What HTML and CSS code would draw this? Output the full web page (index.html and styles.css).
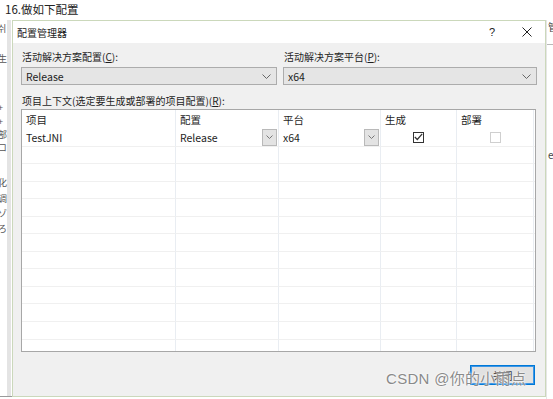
FILE: index.html
```html
<!DOCTYPE html>
<html lang="zh-CN">
<head>
<meta charset="utf-8">
<title>配置管理器</title>
<link rel="stylesheet" href="styles.css">
</head>
<body>
<div class="caption">16.做如下配置</div>
<div class="stage">
  <div class="left-strip">
    <span class="frag f1">쉬</span>
    <span class="frag f2">生</span>
    <span class="frag f3">+</span>
    <span class="frag f4">+</span>
    <span class="frag f5">部</span>
    <span class="frag f6">コ</span>
    <span class="frag f7">化</span>
    <span class="frag f8">调</span>
    <span class="frag f9">ゾ</span>
    <span class="frag f10">ろ</span>
  </div>
  <div class="dialog">
    <div class="titlebar">
      <span class="title">配置管理器</span>
      <span class="help">?</span>
      <svg class="close" width="10" height="10" viewBox="0 0 10 10"><path d="M0.5 0.5 L9.5 9.5 M9.5 0.5 L0.5 9.5" stroke="#222" stroke-width="1" fill="none"/></svg>
    </div>
    <div class="body">
      <div class="top-fields">
        <div class="field">
          <div class="label">活动解决方案配置(<u>C</u>):</div>
          <div class="combo"><span>Release</span><svg class="chev" width="9" height="5" viewBox="0 0 9 5"><path d="M0.5 0.5 L4.5 4.5 L8.5 0.5" stroke="#666" fill="none"/></svg></div>
        </div>
        <div class="field">
          <div class="label">活动解决方案平台(<u>P</u>):</div>
          <div class="combo"><span>x64</span><svg class="chev" width="9" height="5" viewBox="0 0 9 5"><path d="M0.5 0.5 L4.5 4.5 L8.5 0.5" stroke="#666" fill="none"/></svg></div>
        </div>
      </div>
      <div class="label ctx">项目上下文(选定要生成或部署的项目配置)(<u>R</u>):</div>
      <div class="grid">
        <div class="row head">
          <div class="cell">项目</div>
          <div class="cell">配置</div>
          <div class="cell">平台</div>
          <div class="cell">生成</div>
          <div class="cell">部署</div>
          <div class="cell end"></div>
        </div>
        <div class="row">
          <div class="cell">TestJNI</div>
          <div class="cell drop"><span>Release</span><span class="dbtn"><svg width="7" height="4" viewBox="0 0 7 4"><path d="M0.5 0.5 L3.5 3.5 L6.5 0.5" stroke="#777" fill="none"/></svg></span></div>
          <div class="cell drop"><span>x64</span><span class="dbtn"><svg width="7" height="4" viewBox="0 0 7 4"><path d="M0.5 0.5 L3.5 3.5 L6.5 0.5" stroke="#777" fill="none"/></svg></span></div>
          <div class="cell center"><span class="check on"><svg width="9" height="8" viewBox="0 0 9 8"><path d="M0.8 4 L3.3 6.5 L8.2 0.8" stroke="#333" stroke-width="1.2" fill="none"/></svg></span></div>
          <div class="cell center"><span class="check off"></span></div>
          <div class="cell end"></div>
        </div>
        <div class="row"><div class="cell"></div><div class="cell"></div><div class="cell"></div><div class="cell"></div><div class="cell"></div><div class="cell end"></div></div>
        <div class="row"><div class="cell"></div><div class="cell"></div><div class="cell"></div><div class="cell"></div><div class="cell"></div><div class="cell end"></div></div>
        <div class="row"><div class="cell"></div><div class="cell"></div><div class="cell"></div><div class="cell"></div><div class="cell"></div><div class="cell end"></div></div>
        <div class="row"><div class="cell"></div><div class="cell"></div><div class="cell"></div><div class="cell"></div><div class="cell"></div><div class="cell end"></div></div>
        <div class="row"><div class="cell"></div><div class="cell"></div><div class="cell"></div><div class="cell"></div><div class="cell"></div><div class="cell end"></div></div>
        <div class="row"><div class="cell"></div><div class="cell"></div><div class="cell"></div><div class="cell"></div><div class="cell"></div><div class="cell end"></div></div>
        <div class="row"><div class="cell"></div><div class="cell"></div><div class="cell"></div><div class="cell"></div><div class="cell"></div><div class="cell end"></div></div>
        <div class="row"><div class="cell"></div><div class="cell"></div><div class="cell"></div><div class="cell"></div><div class="cell"></div><div class="cell end"></div></div>
        <div class="row"><div class="cell"></div><div class="cell"></div><div class="cell"></div><div class="cell"></div><div class="cell"></div><div class="cell end"></div></div>
        <div class="row"><div class="cell"></div><div class="cell"></div><div class="cell"></div><div class="cell"></div><div class="cell"></div><div class="cell end"></div></div>
        <div class="row"><div class="cell"></div><div class="cell"></div><div class="cell"></div><div class="cell"></div><div class="cell"></div><div class="cell end"></div></div>
        <div class="row"><div class="cell"></div><div class="cell"></div><div class="cell"></div><div class="cell"></div><div class="cell"></div><div class="cell end"></div></div>
      </div>
      <div class="actions">
        <button class="btn">关闭</button>
      </div>
    </div>
  </div>
  <div class="right-strip">
    <span class="rfrag r1">管</span>
    <span class="rline"></span>
    <span class="rfrag r2">e</span>
  </div>
</div>
<div class="watermark">CSDN @你的小雨点</div>
</body>
</html>
```
FILE: styles.css
```css
* { box-sizing: border-box; }
html, body { margin: 0; padding: 0; }
body {
  width: 553px;
  height: 399px;
  overflow: hidden;
  background: #ffffff;
  font-family: "Noto Sans CJK SC", "Noto Sans", sans-serif;
  color: #1b1b1b;
  position: relative;
}
.caption {
  height: 20px;
  padding: 2px 0 0 5px;
  font-size: 11.5px;
  line-height: 15px;
  color: #222;
}
.stage {
  display: flex;
  height: 379px;
}
.left-strip {
  width: 12px;
  height: 377px;
  overflow: hidden;
  display: flex;
  flex-direction: column;
  background: linear-gradient(to right, #ffffff 0, #ffffff 7px, #e4e4e4 7px, #e4e4e4 11px, #ffffff 11px);
  border-bottom: 1px solid #9a9a9a;
}
.frag {
  display: block;
  font-size: 9px;
  line-height: 9px;
  height: 9px;
  margin-left: -2px;
  color: #555;
}
.f1 { margin-top: 4px; }
.f2 { margin-top: 21px; }
.f3 { margin-top: 40px; }
.f4 { margin-top: 5px; }
.f5 { margin-top: 4px; }
.f6 { margin-top: 4px; }
.f7 { margin-top: 26px; }
.f8 { margin-top: 7px; }
.f9 { margin-top: 6px; }
.f10 { margin-top: 6px; }
.dialog {
  width: 534px;
  height: 377px;
  border: 1px solid #cbd8bb;
  background: #f0f0f0;
  display: flex;
  flex-direction: column;
}
.titlebar {
  height: 22px;
  background: #ffffff;
  display: flex;
  align-items: center;
  padding-left: 4px;
  font-size: 10px;
}
.title { flex: 1; color: #222; }
.help {
  font-size: 11px;
  color: #222;
  margin-right: 27px;
  font-family: "Liberation Sans", sans-serif;
}
.close { margin-right: 13px; }
.body {
  padding: 7px 9px 0 8px;
  flex: 1;
  display: flex;
  flex-direction: column;
}
.top-fields {
  display: grid;
  grid-template-columns: 256px 254px;
  column-gap: 6px;
}
.label {
  font-size: 10px;
  line-height: 14px;
  height: 14px;
  color: #1e1e1e;
  padding-left: 1px;
}
.combo {
  margin-top: 3px;
  height: 18px;
  border: 1px solid #acacac;
  background: #e5e5e5;
  display: flex;
  align-items: center;
  justify-content: space-between;
  padding: 0 5px 0 4px;
  font-size: 10.5px;
  color: #1e1e1e;
}
.ctx { margin-top: 9px; }
.grid {
  margin-top: 1px;
  height: 243px;
  width: 515px;
  border: 1px solid #a7a7a7;
  background: #ffffff;
  overflow: hidden;
}
.row {
  display: grid;
  grid-template-columns: 154px 103px 102px 76px 77px 1fr;
  height: 17.55px;
}
.row.head { height: 19px; }
.cell {
  border-right: 1px solid #e9edf2;
  border-bottom: 1px solid #f0f0f0;
  font-size: 10.5px;
  padding-left: 4px;
  display: flex;
  align-items: center;
  color: #1e1e1e;
  overflow: hidden;
}
.row.head .cell { border-bottom: none; }
.cell.end { border-right: none; padding: 0; }
.cell.drop {
  justify-content: space-between;
  padding-right: 1px;
}
.dbtn {
  width: 15px;
  height: 17px;
  background: #e3e3e3;
  border: 1px solid #b9b9b9;
  display: flex;
  align-items: center;
  justify-content: center;
}
.cell.center { justify-content: center; padding-left: 0; }
.check {
  width: 11px;
  height: 11px;
  display: flex;
  align-items: center;
  justify-content: center;
  background: #fff;
}
.check.on { border: 1px solid #333; }
.check.off { border: 1px solid #cfcfcf; }
.actions {
  display: flex;
  justify-content: flex-end;
  margin-top: 13px;
  padding-right: 1px;
}
.btn {
  width: 65px;
  height: 20px;
  border: 1px solid #0078d7;
  box-shadow: inset 0 0 0 1px #3c96e6;
  background: #e1e1e1;
  font-family: "Noto Sans CJK SC", sans-serif;
  font-size: 10px;
  color: #1e1e1e;
  padding: 0;
}
.right-strip {
  flex: 1;
  overflow: hidden;
  display: flex;
  flex-direction: column;
  border-left: 1px solid #e6e6e6;
}
.rfrag {
  display: block;
  font-size: 10px;
  line-height: 10px;
  color: #444;
  margin-left: 1px;
}
.r1 { margin-top: 2px; }
.rline {
  display: block;
  height: 1px;
  background: #b8b8b8;
  margin-top: 12px;
}
.r2 { margin-top: 105px; }
.watermark {
  position: absolute;
  left: 386px;
  top: 370px;
  font-family: "Liberation Sans", "Noto Sans CJK SC", sans-serif;
  font-size: 15px;
  line-height: 18px;
  color: #8a8a8a;
  text-shadow: 0 0 2px #ffffff, 0 0 2px #ffffff;
  letter-spacing: 0.3px;
}
```
